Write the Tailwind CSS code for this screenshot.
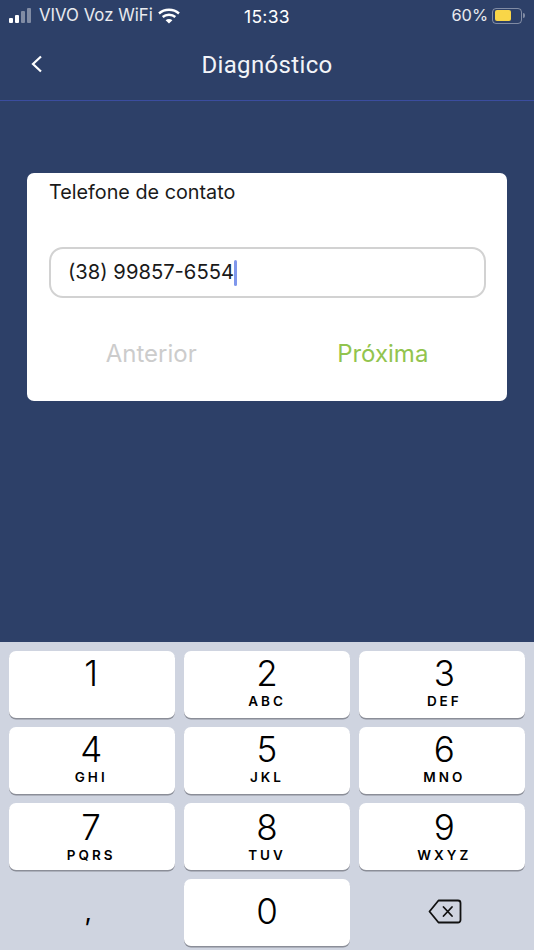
<!DOCTYPE html>
<html lang="pt">
<head>
    <meta charset="UTF-8">
    <title>Diagnóstico</title>
    <script src="https://cdn.jsdelivr.net/npm/@tailwindcss/browser@4"></script>
</head>
<body class="w-[534px] h-[950px] overflow-hidden bg-[#2d4068] flex flex-col font-['Inter',sans-serif]">
    <!-- status bar -->
    <div class="h-[31px] flex items-center pl-[9px] pr-[9px] text-white text-[16.8px] relative">
        <div class="flex items-end gap-[2px] h-[16px] mb-[1px]">
            <div class="w-[4px] h-[5px] bg-white rounded-[1px]"></div>
            <div class="w-[4px] h-[8px] bg-white rounded-[1px]"></div>
            <div class="w-[4px] h-[12px] bg-white/40 rounded-[1px]"></div>
            <div class="w-[4px] h-[15px] bg-white/40 rounded-[1px]"></div>
        </div>
        <span class="ml-[8px] text-white/90">VIVO Voz WiFi</span>
        <svg class="ml-[5px]" width="22" height="16" viewBox="0 0 22 16" fill="none" stroke="white" stroke-width="2.4">
            <path d="M1 5.5 C6.5 0.5 15.5 0.5 21 5.5"/>
            <path d="M4.7 9 C8 6 14 6 17.3 9"/>
            <path d="M11 15.5 L7.6 12.2 C9.5 10.6 12.5 10.6 14.4 12.2 Z" fill="white" stroke="none"/>
        </svg>
        <span class="absolute left-[244px] top-[4px] text-[17.5px] tracking-[0.3px]">15:33</span>
        <span class="ml-auto text-white/90 text-[16.4px]">60%</span>
        <div class="ml-[4px] w-[30px] h-[16px] border border-white/40 rounded-[4px] p-[1.5px]">
            <div class="w-[16px] h-full bg-[#f9d648] rounded-[2px]"></div>
        </div>
        <div class="w-[2px] h-[5px] bg-white/40 rounded-r-sm ml-[1px]"></div>
    </div>

    <!-- nav -->
    <div class="h-[69px] flex items-center justify-center relative border-b border-[#3b4d9f] box-content">
        <svg class="absolute left-[30px] top-[24px]" width="13" height="18" viewBox="0 0 13 18" fill="none" stroke="white" stroke-width="2.2">
            <path d="M11 1.5 L3 9 L11 16.5"/>
        </svg>
        <span class="font-['Roboto',sans-serif] text-[24px] text-[#f2f4f8] tracking-[0.35px] -mt-[2px]">Diagnóstico</span>
    </div>

    <!-- content -->
    <div class="flex-1 px-[27px] pt-[72px]">
        <div class="bg-white rounded-[7px] h-[228px] pl-[22px] pr-[21px] pt-[7px]">
            <div class="text-[19.8px] leading-[24px] text-[#1a1a1a]">Telefone de contato</div>
            <div class="mt-[43px] h-[51px] border-2 border-[#d2d2d2] rounded-[14px] flex items-center pl-[17px] text-[20.2px] text-[#1a1a1a]">
                (38) 99857-6554<span class="w-[3px] h-[26px] bg-[#7f97ec] rounded-sm"></span>
            </div>
            <div class="mt-[40px] grid grid-cols-2 text-[24px] leading-[32px] text-center">
                <span class="text-[#cccccc] pr-[14px]">Anterior</span>
                <span class="text-[#92c44e] pl-[12px]">Próxima</span>
            </div>
        </div>
    </div>

    <!-- numeric keyboard -->
    <div class="h-[308px] bg-[#cfd4e0] px-[9px] pt-[9px] grid grid-cols-3 grid-rows-4 gap-x-[8.5px] gap-y-[9.5px] pb-[4px] text-black">
        <div class="bg-white rounded-[7px] shadow-[0_1.5px_0_#8b8e98] flex flex-col items-center pr-[2px]">
            <span class="text-[35px] leading-[42px] font-light mt-[1px]">1</span>
        </div>
        <div class="bg-white rounded-[7px] shadow-[0_1.5px_0_#8b8e98] flex flex-col items-center">
            <span class="text-[35px] leading-[42px] font-light mt-[1px]">2</span>
            <span class="text-[13.5px] leading-[15px] font-semibold tracking-[3px]">ABC</span>
        </div>
        <div class="bg-white rounded-[7px] shadow-[0_1.5px_0_#8b8e98] flex flex-col items-center pl-[5px]">
            <span class="text-[35px] leading-[42px] font-light mt-[1px]">3</span>
            <span class="text-[13.5px] leading-[15px] font-semibold tracking-[3px]">DEF</span>
        </div>
        <div class="bg-white rounded-[7px] shadow-[0_1.5px_0_#8b8e98] flex flex-col items-center pr-[2px]">
            <span class="text-[35px] leading-[42px] font-light mt-[1px]">4</span>
            <span class="text-[13.5px] leading-[15px] font-semibold tracking-[3px]">GHI</span>
        </div>
        <div class="bg-white rounded-[7px] shadow-[0_1.5px_0_#8b8e98] flex flex-col items-center">
            <span class="text-[35px] leading-[42px] font-light mt-[1px]">5</span>
            <span class="text-[13.5px] leading-[15px] font-semibold tracking-[3px]">JKL</span>
        </div>
        <div class="bg-white rounded-[7px] shadow-[0_1.5px_0_#8b8e98] flex flex-col items-center pl-[5px]">
            <span class="text-[35px] leading-[42px] font-light mt-[1px]">6</span>
            <span class="text-[13.5px] leading-[15px] font-semibold tracking-[3px]">MNO</span>
        </div>
        <div class="bg-white rounded-[7px] shadow-[0_1.5px_0_#8b8e98] flex flex-col items-center pr-[2px]">
            <span class="text-[35px] leading-[42px] font-light mt-[3px]">7</span>
            <span class="text-[13.5px] leading-[15px] font-semibold tracking-[3px]">PQRS</span>
        </div>
        <div class="bg-white rounded-[7px] shadow-[0_1.5px_0_#8b8e98] flex flex-col items-center">
            <span class="text-[35px] leading-[42px] font-light mt-[3px]">8</span>
            <span class="text-[13.5px] leading-[15px] font-semibold tracking-[3px]">TUV</span>
        </div>
        <div class="bg-white rounded-[7px] shadow-[0_1.5px_0_#8b8e98] flex flex-col items-center pl-[5px]">
            <span class="text-[35px] leading-[42px] font-light mt-[3px]">9</span>
            <span class="text-[13.5px] leading-[15px] font-semibold tracking-[3px]">WXYZ</span>
        </div>
        <div class="flex justify-center pr-[8px]">
            <span class="text-[26px] leading-[42px] mt-[12px] font-normal">,</span>
        </div>
        <div class="bg-white rounded-[7px] shadow-[0_1.5px_0_#8b8e98] flex items-center justify-center">
            <span class="text-[35px] leading-[42px] font-light -mt-[4px]">0</span>
        </div>
        <div class="flex items-center justify-center pl-[6px]">
            <svg class="-mt-[2px]" width="34" height="25" viewBox="0 0 34 25" fill="none" stroke="#111" stroke-width="1.8" stroke-linejoin="round" stroke-linecap="round">
                <path d="M10.5 1.5 H30 A2.5 2.5 0 0 1 32.5 4 V21 A2.5 2.5 0 0 1 30 23.500 H10.5 L1.500 12.500 Z"/>
                <path d="M15.500 8 L24 17 M24 8 L15.500 17"/>
            </svg>
        </div>
    </div>
</body>
</html>
